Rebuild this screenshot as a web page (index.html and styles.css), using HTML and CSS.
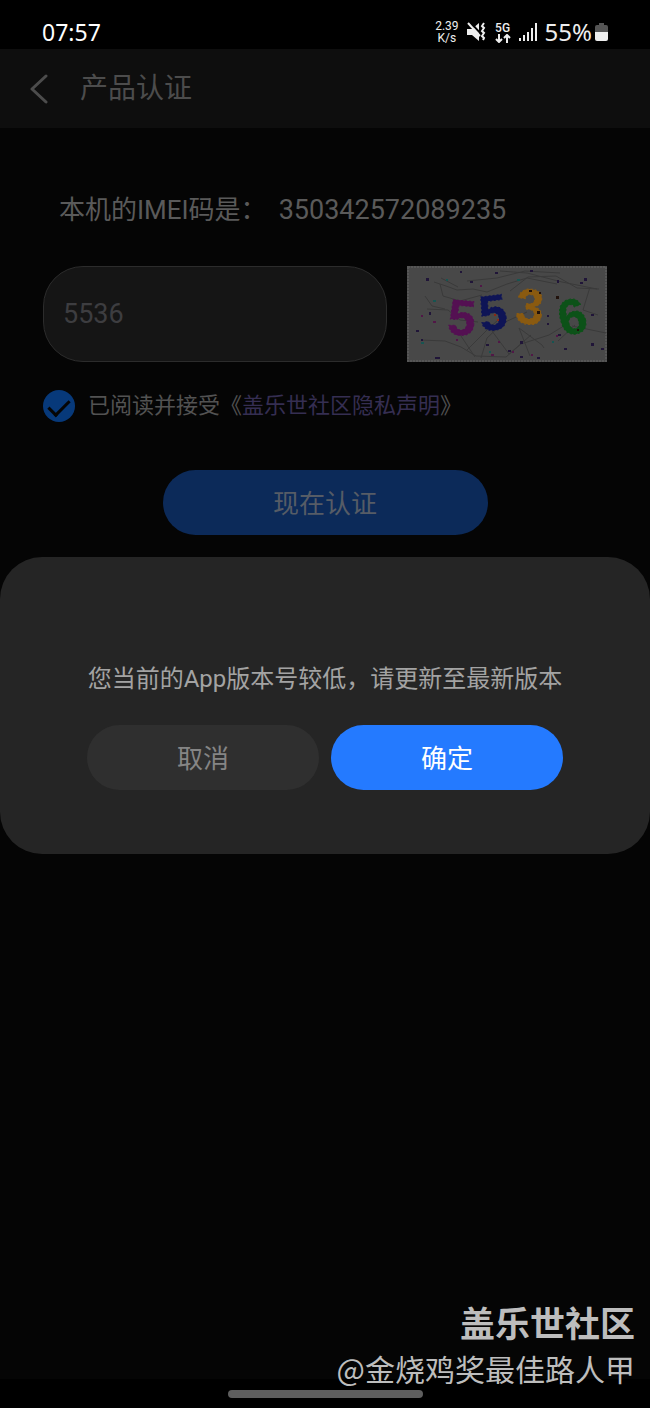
FILE: index.html
```html
<!DOCTYPE html>
<html lang="zh-CN">
<head>
  <meta charset="UTF-8">
  <meta name="viewport" content="width=device-width, initial-scale=1">
  <title>产品认证</title>
  <link rel="stylesheet" href="styles.css">
</head>
<body>
<div class="status-bar">
  <span class="time">07:57</span>
  <div class="status-icons">
    <div class="net-speed"><span>2.39</span><span>K/s</span></div>
    <svg class="icon-mute" width="20" height="20" viewBox="0 0 20 20">
      <path d="M0 7h5l7-6v18l-7-6H0z" fill="#eee"/>
      <path d="M3 0l11 12" stroke="#000" stroke-width="2"/>
      <path d="M1 1l12 13" stroke="#eee" stroke-width="2"/>
      <path d="M17 1l-2 3 2 2-2 3 2 2-2 3 2 2-1 2" fill="none" stroke="#eee" stroke-width="2"/>
    </svg>
    <div class="net-type">
      <span>5G</span>
      <svg width="16" height="9" viewBox="0 0 16 9" fill="none" stroke="#eee" stroke-width="2">
        <path d="M4 0v8M1 5l3 3 3-3M12 9V1M9 4l3-3 3 3"/>
      </svg>
    </div>
    <svg class="icon-signal" width="18" height="18" viewBox="0 0 18 18" fill="#eee">
      <path d="M0 15h2v3H0zM4 12h2v6H4zM8 9h2v9H8zM12 5h2v13h-2zM16 0h2v18h-2z"/>
    </svg>
    <span class="percent">55%</span>
    <svg class="icon-battery" width="13" height="18" viewBox="0 0 13 18">
      <path d="M4 0h5v2h2q2 0 2 2v5H0V4q0-2 2-2h2z" fill="#555"/>
      <path d="M0 9h13v7q0 2-2 2H2q-2 0-2-2z" fill="#eee"/>
    </svg>
  </div>
</div>

<header class="header">
  <button class="back" aria-label="返回">
    <svg width="18" height="30" viewBox="0 0 18 30" fill="none" stroke="#4c4c4c" stroke-width="3" stroke-linecap="round" stroke-linejoin="round">
      <path d="M16 2L2 15l14 13"/>
    </svg>
  </button>
  <h1>产品认证</h1>
</header>

<main class="content">
  <p class="imei"><span>本机的IMEI码是：</span><span class="imei-number">350342572089235</span></p>

  <div class="code-row">
    <input class="code-input" type="text" placeholder="5536" aria-label="验证码">
    <svg class="captcha" width="200" height="96" viewBox="0 0 200 96" role="img" aria-label="验证码图片">
      <rect width="200" height="96" fill="#484848"/>
      <rect x="1" y="1" width="198" height="94" fill="none" stroke="#565656" stroke-width="2" stroke-dasharray="2 1"/>
      <g fill="none" stroke="#3a3a3a" stroke-width="1">
        <path d="M27 16l12 4 11 4 16-1 14 3 20-8 20-6 30 6"/>
        <path d="M34 12l17 9M33 18l3 12 17 5 22-6M60 15l30-3 28-7 35 2"/>
        <path d="M93 5l27 2 35 9 35 7M103 25l18-14 28-1 21 12 22 1"/>
        <path d="M18 30l7 10 13 3M20 43l21 1 12 10 18 2"/>
        <path d="M14 74l24 1 16 6 15 9 30 1 15-13 28-9 18-11"/>
        <path d="M52 67l16 24M74 92l6-20 16-15 24-11M60 84l22-22 17-15"/>
        <path d="M112 62l11 28M112 62l23 17 2 3M183 21l-7 23 15 5M165 60l34 7"/>
        <path d="M85 65l17 23 22-19M151 75l17-16"/>
      </g>
      <g fill="#201538">
        <path d="M19 12h3v3h-3zM53 5h2v2h-2zM63 15h3v2h-3zM88 6h3v2h-3zM123 4h3v2h-3zM150 14h2v3h-2zM177 12h3v3h-3zM173 16h3v2h-3z"/>
        <path d="M22 46h2v3h-2zM9 64h3v2h-3zM14 73h2v2h-2zM28 91h5v2h-5zM79 78h3v2h-3zM101 84h3v2h-3zM113 75h3v3h-3zM113 90h3v2h-3z"/>
        <path d="M130 91h3v2h-3zM140 49h2v2h-2zM140 57h2v2h-2zM151 68h3v2h-3zM157 82h3v2h-3zM184 77h3v3h-3zM194 82h3v2h-3zM184 48h3v2h-3z"/>
      </g>
      <g fill="#511747">
        <path d="M14 49h2v2h-2zM26 55h3v2h-3zM73 19h2v2h-2zM49 73h2v2h-2zM91 75h2v2h-2zM84 88h3v2h-3zM105 85h2v2h-2zM149 69h2v2h-2zM124 88h2v2h-2z"/>
      </g>
      <g fill="#175451">
        <path d="M14 76h3v2h-3zM26 34h3v2h-3zM39 13h2v2h-2zM110 13h3v2h-3zM145 75h2v2h-2zM82 85h2v2h-2zM154 39h2v2h-2z"/>
      </g>
      <g class="captcha-digits">
        <text x="41" y="69" fill="#541052" stroke="#541052" transform="rotate(5 55 50)">5</text>
        <text x="72" y="64" fill="#0e1456" stroke="#0e1456" transform="rotate(-7 86 46)">5</text>
        <text x="109" y="58" fill="#8a5a10" stroke="#8a5a10" transform="rotate(5 123 40)">3</text>
        <text x="151" y="68" fill="#0c5218" stroke="#0c5218" transform="rotate(-15 165 50)">6</text>
      </g>
      <path d="M87 48h2v2h-2zM90 53h2v2h-2z" fill="#8a2514"/>
      <path d="M122 24h3v2h-3zM130 45h3v3h-3zM132 26h2v2h-2zM149 30h3v3h-3zM170 63h2v2h-2z" fill="#21120c"/>
    </svg>
  </div>

  <div class="agree">
    <input type="checkbox" id="agree" checked>
    <label for="agree">已阅读并接受《<a href="#">盖乐世社区隐私声明</a>》</label>
  </div>

  <button class="btn verify">现在认证</button>
</main>

<div class="nav-bar"><div class="nav-handle"></div></div>

<div class="overlay">
  <div class="dialog" role="dialog" aria-modal="true" aria-labelledby="dialog-text">
    <p id="dialog-text">您当前的App版本号较低，请更新至最新版本</p>
    <div class="dialog-actions">
      <button class="btn cancel">取消</button>
      <button class="btn confirm">确定</button>
    </div>
  </div>
</div>

<div class="watermark">
  <strong>盖乐世社区</strong>
  <span>@金烧鸡奖最佳路人甲</span>
</div>
</body>
</html>
```
FILE: styles.css
```css
* {
  box-sizing: border-box;
}

body {
  margin: 0;
  min-height: 100vh;
  display: flex;
  flex-direction: column;
  position: relative;
  background: #050505;
  color: #5a5a5a;
  font-family: Roboto, "Noto Sans CJK SC", sans-serif;
}

h1, p {
  margin: 0;
}

button, input {
  font-family: inherit;
}

/* 状态栏 */
.status-bar {
  height: 49px;
  padding: 15px 42px 0;
  display: flex;
  align-items: center;
  justify-content: space-between;
  background: #000;
  color: #eee;
  font-family: "Noto Sans", sans-serif;
}

.time {
  font-size: 23px;
  line-height: 34px;
  color: #fff;
}

.status-icons {
  display: flex;
  align-items: center;
  gap: 8px;
}

.net-speed, .net-type {
  display: flex;
  flex-direction: column;
  align-items: center;
  font-family: Roboto, sans-serif;
  font-size: 12px;
  line-height: 12px;
}

.net-type {
  font-weight: 500;
}

.percent {
  font-size: 24px;
  line-height: 34px;
}

.icon-battery {
  margin-left: -5px;
}

.header {
  height: 79px;
  padding: 0 30px;
  display: flex;
  align-items: center;
  gap: 32px;
  background: #0e0e0e;
}

.header h1 {
  font-size: 28px;
  font-weight: 400;
  line-height: 40px;
  color: #4c4c4c;
}

.back {
  display: flex;
  padding: 0;
  border: none;
  background: none;
  cursor: pointer;
}

.content {
  flex: 1;
  padding: 62px 43px 0;
  display: flex;
  flex-direction: column;
}

.imei {
  padding-left: 16px;
  display: flex;
  gap: 12px;
  font-size: 26px;
  line-height: 40px;
}

.imei-number {
  font-size: 27px;
}

.code-row {
  margin-top: 36px;
  display: flex;
  gap: 20px;
}

.code-input {
  flex: 1;
  min-width: 0;
  height: 96px;
  padding: 0 19px;
  border: 1px solid #2c2c2c;
  border-radius: 40px;
  background: #151515;
  color: #3d3d40;
  font-size: 27px;
}

.code-input::placeholder {
  color: #3d3d40;
}

.captcha {
  flex: none;
}

.captcha-digits {
  font-family: "Liberation Sans", sans-serif;
  font-size: 50px;
  font-weight: 700;
  stroke-width: 1px;
  stroke-dasharray: 2 2;
}

.agree {
  margin-top: 28px;
  display: flex;
  align-items: center;
  gap: 13px;
  font-size: 22px;
  line-height: 32px;
  color: #525252;
}

.agree input {
  appearance: none;
  width: 32px;
  height: 32px;
  margin: 0;
  display: flex;
  justify-content: center;
  border-radius: 50%;
  background: #07397a;
}

.agree input:checked::after {
  content: "";
  width: 9px;
  height: 18px;
  margin-top: 5px;
  border: solid #050505;
  border-width: 0 3px 3px 0;
  transform: rotate(45deg);
}

.agree a {
  color: #352e52;
  text-decoration: none;
}

.btn {
  height: 65px;
  padding: 0 0 2px;
  border: none;
  border-radius: 33px;
  font-size: 26px;
  cursor: pointer;
}

.verify {
  width: 325px;
  max-width: 100%;
  margin-top: 48px;
  align-self: center;
  background: #0c2a59;
  color: #565c66;
}

.nav-bar {
  height: 29px;
  padding-top: 11px;
  background: #000;
}

.nav-handle {
  width: 30%;
  height: 8px;
  margin: 0 auto;
  border-radius: 4px;
  background: #5e5e5e;
}

.overlay {
  position: absolute;
  inset: 0;
  padding-top: 3px;
  display: flex;
  align-items: center;
}

.dialog {
  width: 100%;
  padding: 104px 87px 64px;
  border-radius: 42px;
  background: #252525;
  color: #a3a3a3;
}

.dialog p {
  font-size: 24px;
  line-height: 36px;
  text-align: center;
  white-space: nowrap;
}

.dialog-actions {
  margin-top: 28px;
  display: flex;
  gap: 12px;
}

.dialog-actions .btn {
  flex: 1;
}

.cancel {
  background: #2f2f2f;
  color: #858585;
}

.confirm {
  background: #247aff;
  color: #fff;
}

.watermark {
  position: absolute;
  right: 15px;
  bottom: 17px;
  display: flex;
  flex-direction: column;
  align-items: flex-end;
  color: #bdbdbd;
  font-family: "Noto Sans CJK SC", sans-serif;
  font-size: 30px;
  line-height: 46px;
}

.watermark strong {
  font-size: 35px;
}
```
